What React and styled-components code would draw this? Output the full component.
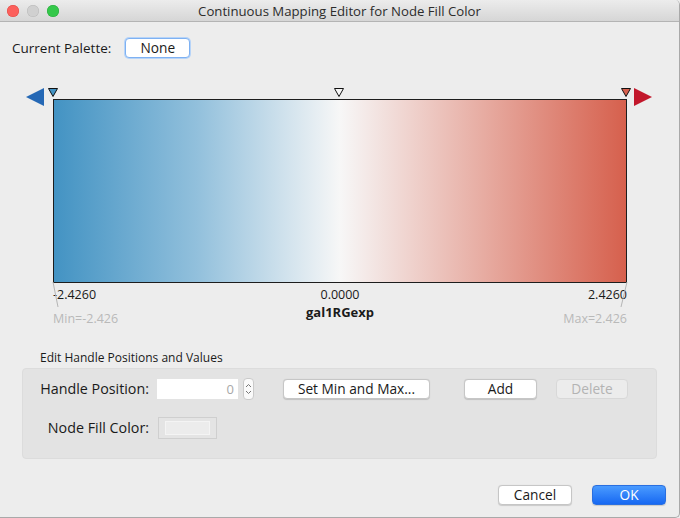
import React from 'react';
import styled, { createGlobalStyle } from 'styled-components';

const Global = createGlobalStyle`
  html, body { margin: 0; padding: 0; background: #ececec; }
  body { font-family: "Open Sans", "Liberation Sans", Arial, sans-serif; font-size: 13.5px; line-height: 16px; color: #1a1a1a; }
`;

const Window = styled.div`
  width: 680px;
  height: 518px;
  box-sizing: border-box;
  background: #ededed;
  border-right: 1px solid #a9a9a9;
  border-bottom: 1px solid #a9a9a9;
  border-radius: 0 5px 5px 0;
  display: flex;
  flex-direction: column;
  overflow: hidden;
`;

const TitleBar = styled.div`
  height: 22px;
  box-sizing: border-box;
  background: linear-gradient(#ececec, #d6d6d6);
  border-bottom: 1px solid #b4b4b4;
  display: flex;
  align-items: center;
  position: relative;
  padding-left: 7px;
`;

const Lights = styled.div`
  display: flex;
  gap: 8px;
`;

const Light = styled.span`
  width: 12px;
  height: 12px;
  border-radius: 50%;
  background: ${p => p.$c};
  box-shadow: inset 0 0 0 0.5px ${p => p.$b};
`;

const Title = styled.div`
  position: absolute;
  left: 0;
  right: 0;
  text-align: center;
  font-size: 13.2px;
  color: #2c2c2c;
  pointer-events: none;
`;

const PaletteRow = styled.div`
  display: flex;
  align-items: center;
  gap: 14px;
  margin: 16px 0 0 12px;
  height: 20px;
`;

const Button = styled.button`
  font-family: inherit;
  font-size: 13.7px;
  line-height: 16px;
  height: 20px;
  width: ${p => p.$w}px;
  padding: 0;
  border-radius: 4px;
  background: ${p => (p.$disabled ? '#ececec' : '#ffffff')};
  color: ${p => (p.$disabled ? '#b3b3b3' : '#1a1a1a')};
  border: 1px solid ${p => (p.$disabled ? '#d8d8d8' : '#c6c6c6')};
  box-shadow: ${p => (p.$disabled ? 'none' : '0 0.5px 1px rgba(0,0,0,0.15)')};
`;

const FocusButton = styled(Button)`
  border: 1px solid #7eb1f2;
  box-shadow: 0 0 0 1px #b7d4f8;
`;

const PrimaryButton = styled(Button)`
  background: linear-gradient(#4a9bff, #1768f2);
  border: 1px solid #2a6fe0;
  color: #ffffff;
`;

const Editor = styled.div`
  position: relative;
  margin: 28px 52px 0 53px;
`;

const HandleStrip = styled.div`
  position: relative;
  height: 13px;
`;

const Handle = styled.svg`
  position: absolute;
  top: 2px;
  width: 10px;
  height: 9px;
`;

const BigArrow = styled.svg`
  position: absolute;
  top: 2px;
  width: 18px;
  height: 18px;
`;

const Bar = styled.div`
  height: 184px;
  box-sizing: border-box;
  border: 1px solid #1d1d1d;
  background: linear-gradient(to right, #4393c3 0%, #92c0dc 25%, #f7f7f7 50%, #e7aca2 75%, #d6604d 100%);
`;

const ValueRow = styled.div`
  display: grid;
  grid-template-columns: 1fr auto 1fr;
  font-size: 12.5px;
  margin-top: 4px;
  height: 15px;
  line-height: 15px;
  align-items: center;
`;

const Value = styled.span`
  justify-self: ${p => p.$align};
`;

const NameRow = styled.div`
  display: grid;
  grid-template-columns: 1fr auto 1fr;
  height: 24px;
`;

const Name = styled.span`
  font-weight: bold;
  font-size: 13px;
  align-self: start;
  padding-top: 2px;
`;

const Bound = styled.span`
  font-size: 12.5px;
  line-height: 15px;
  color: #b9b9b9;
  align-self: end;
  justify-self: ${p => p.$align};
`;

const Leaders = styled.svg`
  position: absolute;
  left: -6px;
  top: 196px;
  width: 586px;
  height: 30px;
  pointer-events: none;
`;

const SectionLabel = styled.div`
  font-size: 12px;
  margin: 24px 0 0 40px;
  height: 15px;
  line-height: 15px;
`;

const Panel = styled.div`
  margin: 3px 0 0 22px;
  width: 635px;
  height: 91px;
  box-sizing: border-box;
  background: #e3e3e3;
  border: 1px solid #dcdcdc;
  border-radius: 4px;
  padding-top: 9px;
  display: flex;
  flex-direction: column;
  gap: 17px;
`;

const FieldRow = styled.div`
  display: flex;
  align-items: center;
`;

const FieldLabel = styled.span`
  width: 126px;
  text-align: right;
  font-size: 14.3px;
  margin-right: 8px;
`;

const NumberInput = styled.div`
  width: 81px;
  height: 20px;
  box-sizing: border-box;
  background: #ffffff;
  color: #a8a8a8;
  text-align: right;
  padding-right: 4px;
  line-height: 20px;
  font-size: 13px;
`;

const Spinner = styled.div`
  width: 11px;
  height: 22px;
  margin-left: 5px;
  box-sizing: border-box;
  border: 1px solid #cacaca;
  border-radius: 4px;
  background: #fafafa;
  display: flex;
  align-items: center;
  justify-content: center;
`;

const Swatch = styled.div`
  margin-left: 1px;
  width: 59px;
  height: 22px;
  box-sizing: border-box;
  border: 1px solid #cfcfcf;
  background: #e4e4e4;
  padding: 3px 6px;
  div {
    height: 100%;
    background: #ececec;
    border: 1px solid #f4f4f4;
    box-sizing: border-box;
  }
`;

const Footer = styled.div`
  display: flex;
  justify-content: flex-end;
  gap: 20px;
  margin: 26px 13px 0 0;
`;

const Tri = ({ fill, left }) => (
  <Handle viewBox="0 0 10 9" style={{ left: left - 5 }}>
    <polygon points="0.5,0.5 9.5,0.5 5,8.5" fill={fill} stroke="#111" strokeWidth="1" />
  </Handle>
);

export default function App() {
  return (
    <>
      <Global />
      <Window>
        <TitleBar>
          <Lights>
            <Light $c="#fc605c" $b="#de4a45" />
            <Light $c="#d0d0d0" $b="#b8b8b8" />
            <Light $c="#34c84a" $b="#2aa83c" />
          </Lights>
          <Title>Continuous Mapping Editor for Node Fill Color</Title>
        </TitleBar>

        <PaletteRow>
          <span>Current Palette:</span>
          <FocusButton $w={65}>None</FocusButton>
        </PaletteRow>

        <Editor>
          <BigArrow viewBox="0 0 18 18" style={{ left: -27 }}>
            <polygon points="0,9 18,0 18,18" fill="#2568b5" />
          </BigArrow>
          <BigArrow viewBox="0 0 18 18" style={{ right: -25 }}>
            <polygon points="0,0 18,9 0,18" fill="#c2172b" />
          </BigArrow>
          <HandleStrip>
            <Tri fill="#4393c3" left={0} />
            <Tri fill="#f7f7f7" left={286} />
            <Tri fill="#d6604d" left={573} />
          </HandleStrip>
          <Bar />
          <ValueRow>
            <Value $align="start">-2.4260</Value>
            <Value $align="center">0.0000</Value>
            <Value $align="end">2.4260</Value>
          </ValueRow>
          <NameRow>
            <Bound $align="start">Min=-2.426</Bound>
            <Name>gal1RGexp</Name>
            <Bound $align="end">Max=2.426</Bound>
          </NameRow>
          <Leaders viewBox="0 0 586 30">
            <line x1="6" y1="0" x2="11" y2="25" stroke="#b5b5b5" strokeWidth="1" />
            <line x1="580" y1="0" x2="574" y2="25" stroke="#b5b5b5" strokeWidth="1" />
          </Leaders>
        </Editor>

        <SectionLabel>Edit Handle Positions and Values</SectionLabel>
        <Panel>
          <FieldRow>
            <FieldLabel>Handle Position:</FieldLabel>
            <NumberInput>0</NumberInput>
            <Spinner>
              <svg width="7" height="14" viewBox="0 0 7 14">
                <polyline points="1,5 3.5,2.5 6,5" fill="none" stroke="#777" strokeWidth="1" />
                <polyline points="1,9 3.5,11.5 6,9" fill="none" stroke="#777" strokeWidth="1" />
              </svg>
            </Spinner>
            <Button $w={147} style={{ marginLeft: 29 }}>Set Min and Max...</Button>
            <Button $w={73} style={{ marginLeft: 34 }}>Add</Button>
            <Button $w={72} $disabled style={{ marginLeft: 19 }}>Delete</Button>
          </FieldRow>
          <FieldRow>
            <FieldLabel>Node Fill Color:</FieldLabel>
            <Swatch><div /></Swatch>
          </FieldRow>
        </Panel>

        <Footer>
          <Button $w={74}>Cancel</Button>
          <PrimaryButton $w={74}>OK</PrimaryButton>
        </Footer>
      </Window>
    </>
  );
}
